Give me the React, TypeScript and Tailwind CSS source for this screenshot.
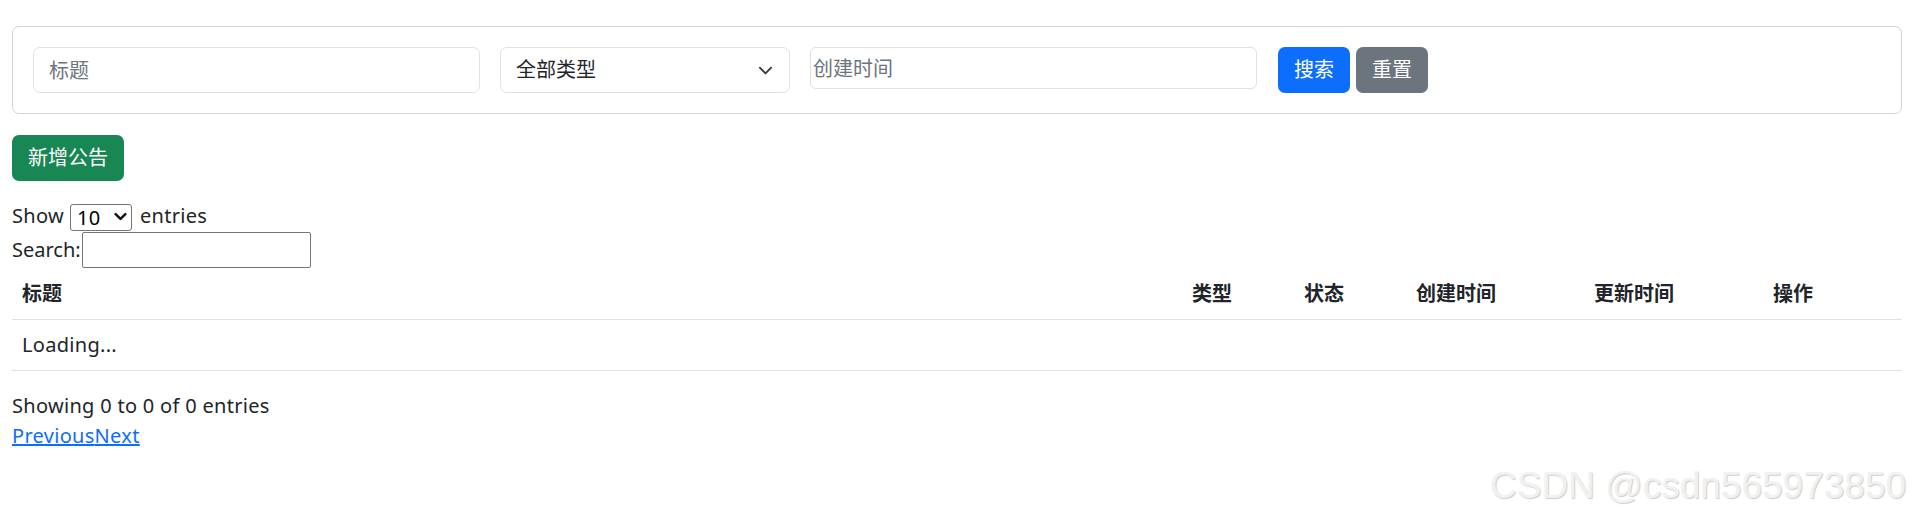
import React from "react";

const Chevron = ({ className, sw = 2, color = "#343a40" }: { className?: string; sw?: number; color?: string }) => (
  <svg viewBox="0 0 16 16" className={className} fill="none" stroke={color} strokeWidth={sw} strokeLinecap="round" strokeLinejoin="round">
    <path d="M2 5l6 6 6-6" />
  </svg>
);

export default function App() {
  return (
    <div className="relative w-[1917px] h-[516px] overflow-hidden bg-white px-[12px] pt-[26px] text-[20px] leading-[30px] text-[#212529] font-['Segoe_UI','Noto_Sans','Noto_Sans_CJK_SC',sans-serif]">
      {/* filter card */}
      <div className="w-[1890px] border border-[#d3d3d3] rounded-[7px] p-[20px] flex items-start gap-[20px]">
        <input
          placeholder="标题"
          className="w-[447px] h-[46px] border border-[#dee2e6] rounded-[7px] px-[15px] text-[20px] outline-none placeholder:text-[#6c757d]"
        />
        <div className="relative w-[290px] h-[46px]">
          <select className="appearance-none w-full h-full border border-[#dee2e6] rounded-[7px] pl-[15px] pr-[45px] text-[20px] bg-white text-[#212529] outline-none">
            <option>全部类型</option>
          </select>
          <Chevron className="pointer-events-none absolute right-[17px] top-[16px] w-[15px] h-[15px]" />
        </div>
        <input
          placeholder="创建时间"
          className="w-[447px] h-[42px] border border-[#dee2e6] rounded-[6px] px-[2px] text-[20px] outline-none placeholder:text-[#6c757d]"
        />
        <div className="flex gap-[6px] ml-[1px]">
          <button className="h-[46px] w-[72px] rounded-[7px] bg-[#0d6efd] text-white text-[20px]">搜索</button>
          <button className="h-[46px] w-[72px] rounded-[7px] bg-[#6c757d] text-white text-[20px]">重置</button>
        </div>
      </div>

      <button className="mt-[21px] h-[46px] w-[112px] rounded-[7px] bg-[#198754] text-white text-[20px]">新增公告</button>

      {/* datatable controls */}
      <div className="mt-[20px] h-[30px] flex items-center tracking-[0.3px]">
        <span>Show</span>
        <span className="relative ml-[6px] mr-[8px] inline-block w-[62px] h-[27px]">
          <select className="appearance-none w-full h-full border border-[#767676] rounded-[3px] pl-[6px] text-[20px] leading-[25px] bg-white text-black outline-none">
            <option>10</option>
          </select>
          <Chevron className="pointer-events-none absolute right-[5px] top-[7px] w-[13px] h-[13px]" sw={3} color="#111" />
        </span>
        <span>entries</span>
      </div>
      <div className="h-[38px] flex items-center">
        <span>Search:</span>
        <input className="ml-[1px] w-[229px] h-[36px] border border-[#767676] rounded-[2px] outline-none" />
      </div>

      <table className="w-[1890px] table-fixed border-collapse">
        <colgroup>
          <col className="w-[1170px]" />
          <col className="w-[112px]" />
          <col className="w-[112px]" />
          <col className="w-[178px]" />
          <col className="w-[179px]" />
          <col />
        </colgroup>
        <thead>
          <tr className="border-b border-[#dee2e6]">
            {["标题", "类型", "状态", "创建时间", "更新时间", "操作"].map((h) => (
              <th key={h} className="text-left font-bold px-[10px] py-[10px] leading-[30px]">{h}</th>
            ))}
          </tr>
        </thead>
        <tbody>
          <tr className="border-b border-[#dee2e6]">
            <td colSpan={6} className="px-[10px] py-[10px] leading-[30px] tracking-[0.3px]">Loading...</td>
          </tr>
        </tbody>
      </table>

      <div className="mt-[20px] tracking-[0.3px]">Showing 0 to 0 of 0 entries</div>
      <div className="tracking-[0.3px]">
        <a href="#" className="text-[#0d6efd] underline">Previous</a>
        <a href="#" className="text-[#0d6efd] underline">Next</a>
      </div>

      <div className="absolute left-[1490px] top-[467px] text-[37px] leading-none font-['Liberation_Sans',Arial,sans-serif] text-[#f1f1f1] [text-shadow:1px_1px_1px_rgba(0,0,0,0.2)] whitespace-nowrap">
        CSDN @csdn565973850
      </div>
    </div>
  );
}
